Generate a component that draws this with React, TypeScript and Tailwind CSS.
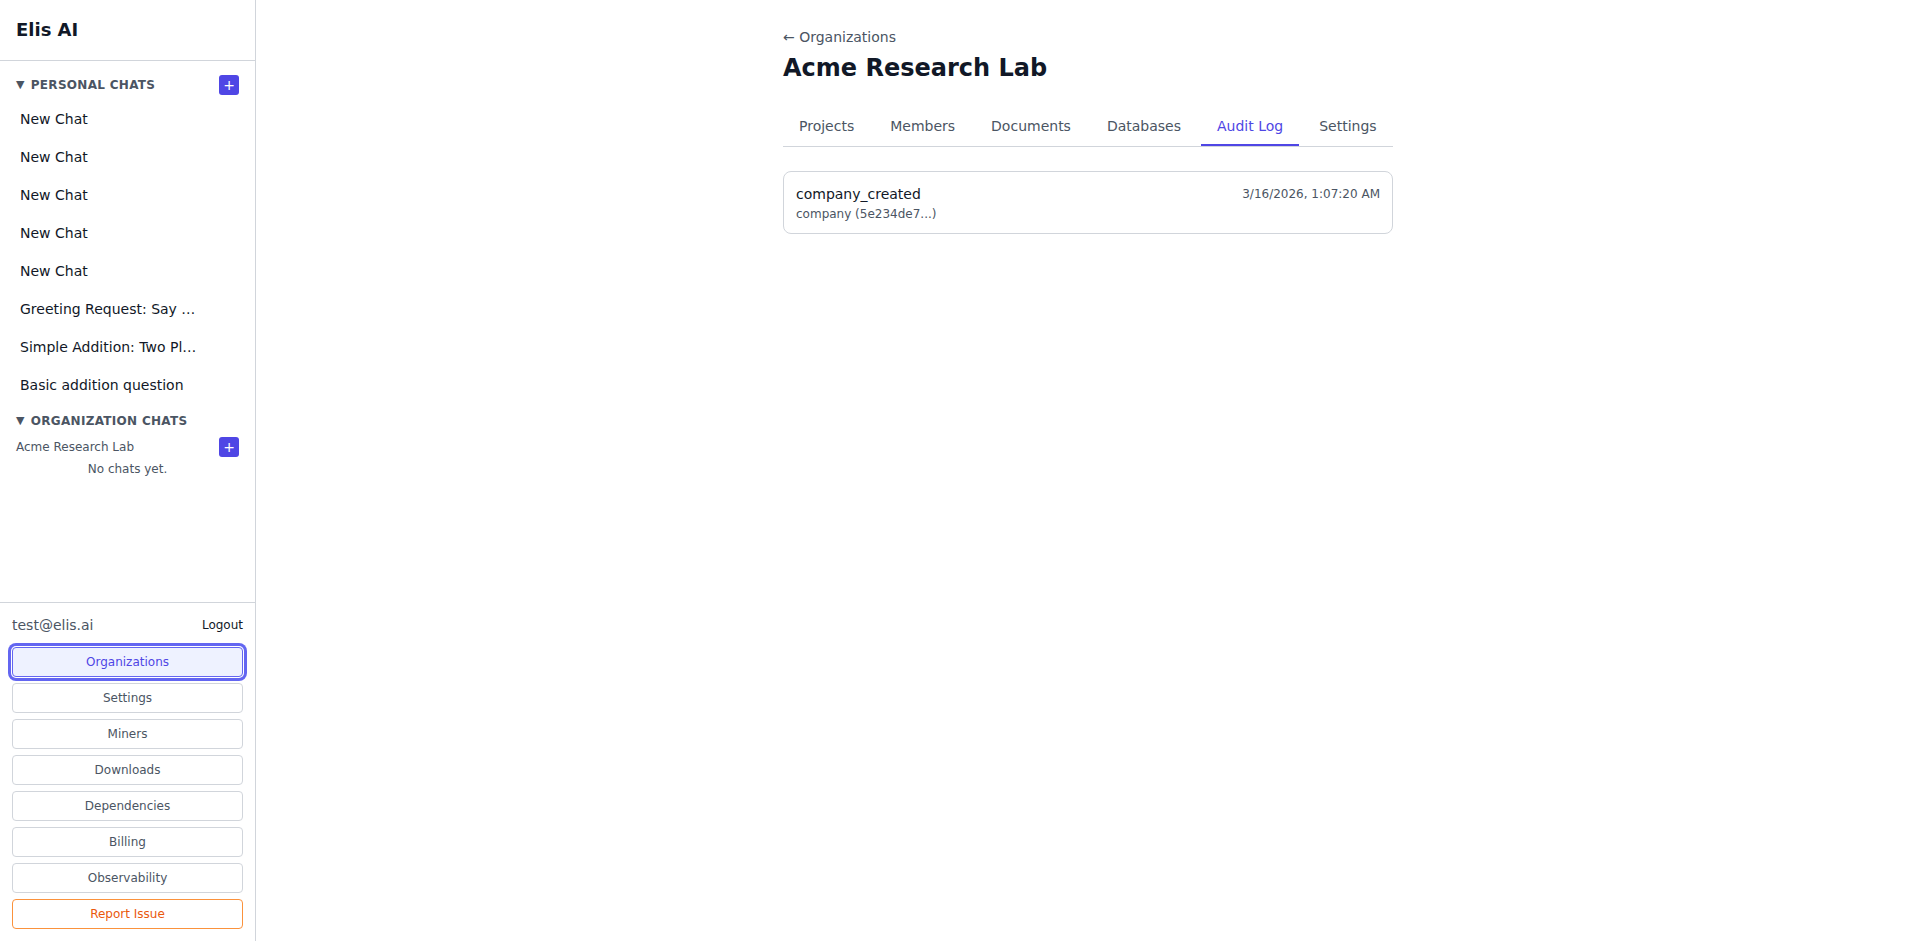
import { useState } from 'react';

const personalChats = [
  'New Chat',
  'New Chat',
  'New Chat',
  'New Chat',
  'New Chat',
  'Greeting Request: Say …',
  'Simple Addition: Two Pl…',
  'Basic addition question',
];

const navButtons = [
  'Settings',
  'Miners',
  'Downloads',
  'Dependencies',
  'Billing',
  'Observability',
];

const tabs = ['Projects', 'Members', 'Documents', 'Databases', 'Audit Log', 'Settings'];

function PlusButton() {
  return (
    <button className="flex h-5 w-5 items-center justify-center rounded-[3px] bg-[#4f46e5] text-sm leading-none text-white">
      +
    </button>
  );
}

function SectionHeader({ label, action }: { label: string; action?: boolean }) {
  return (
    <div className="flex h-5 items-center justify-between px-2">
      <div className="flex items-center gap-1.5 text-xs font-bold uppercase tracking-wide text-[#4b5563]">
        <span className="text-[11px]">▼</span>
        <span>{label}</span>
      </div>
      {action && <PlusButton />}
    </div>
  );
}

function Sidebar() {
  return (
    <aside className="flex h-full w-64 shrink-0 flex-col border-r border-[#d1d5db] bg-white">
      {/* Brand */}
      <div className="border-b border-[#d1d5db] px-4 py-4">
        <h1 className="text-lg font-bold leading-7 text-[#111827]">Elis AI</h1>
      </div>

      {/* Chats */}
      <div className="flex-1 overflow-y-auto px-2 pt-[14px]">
        <SectionHeader label="Personal Chats" action />
        <ul className="mt-[5px]">
          {personalChats.map((title, i) => (
            <li key={i}>
              <div className="flex items-center gap-2 rounded px-3 py-[9px] text-sm leading-5 text-[#111827]">
                <span className="min-w-0 flex-1 whitespace-nowrap">{title}</span>
                <button className="h-5 w-6 shrink-0 text-xs text-[#9ca3af] opacity-0">×</button>
              </div>
            </li>
          ))}
        </ul>

        <div className="mt-[7px]">
          <SectionHeader label="Organization Chats" />
        </div>
        <div className="mt-[6px] flex h-5 items-center justify-between px-2">
          <span className="text-xs text-[#4b5563]">Acme Research Lab</span>
          <PlusButton />
        </div>
        <p className="mt-1 text-center text-xs leading-4 text-[#4b5563]">No chats yet.</p>
      </div>

      {/* Account */}
      <div className="border-t border-[#d1d5db] p-3">
        <div className="mb-3 flex items-center justify-between">
          <span className="text-sm leading-5 text-[#4b5563]">test@elis.ai</span>
          <button className="text-xs text-[#111827]">Logout</button>
        </div>
        <div className="flex flex-col gap-1.5">
          <button className="w-full rounded border border-[#6366f1] bg-[#eef2ff] py-1.5 text-xs leading-4 text-[#4f46e5] ring-[3px] ring-[#6366f1] ring-offset-1">
            Organizations
          </button>
          {navButtons.map((label) => (
            <button
              key={label}
              className="w-full rounded border border-[#d1d5db] bg-white py-1.5 text-xs leading-4 text-[#4b5563]"
            >
              {label}
            </button>
          ))}
          <button className="w-full rounded border border-[#fb923c] bg-white py-1.5 text-xs leading-4 text-[#ea580c]">
            Report Issue
          </button>
        </div>
      </div>
    </aside>
  );
}

export default function App() {
  const [activeTab, setActiveTab] = useState('Audit Log');

  return (
    <div className="flex h-screen w-full overflow-hidden bg-white font-['DejaVu_Sans',sans-serif]">
      <Sidebar />

      <main className="flex-1 overflow-y-auto">
        <div className="mx-auto w-full max-w-[610px] pt-[27px]">
          <a className="block text-sm leading-5 text-[#4b5563]">← Organizations</a>
          <h2 className="mt-[5px] text-2xl font-bold leading-8 text-[#111827]">Acme Research Lab</h2>

          {/* Tabs */}
          <div className="mt-6 flex gap-1 border-b border-[#d1d5db]">
            {tabs.map((tab) => (
              <button
                key={tab}
                onClick={() => setActiveTab(tab)}
                className={
                  tab === activeTab
                    ? 'border-b-2 border-[#4f46e5] px-4 py-2 text-sm leading-5 text-[#4f46e5]'
                    : 'border-b-2 border-transparent px-4 py-2 text-sm leading-5 text-[#4b5563]'
                }
              >
                {tab}
              </button>
            ))}
          </div>

          {/* Audit entries */}
          <div className="mt-6 rounded-lg border border-[#d1d5db] bg-white px-3 pb-[11px] pt-3">
            <div className="flex items-center justify-between">
              <span className="text-sm leading-5 text-[#111827]">company_created</span>
              <span className="text-xs leading-5 text-[#4b5563]">3/16/2026, 1:07:20 AM</span>
            </div>
            <div className="mt-0.5 text-xs leading-4 text-[#4b5563]">company (5e234de7...)</div>
          </div>
        </div>
      </main>
    </div>
  );
}
